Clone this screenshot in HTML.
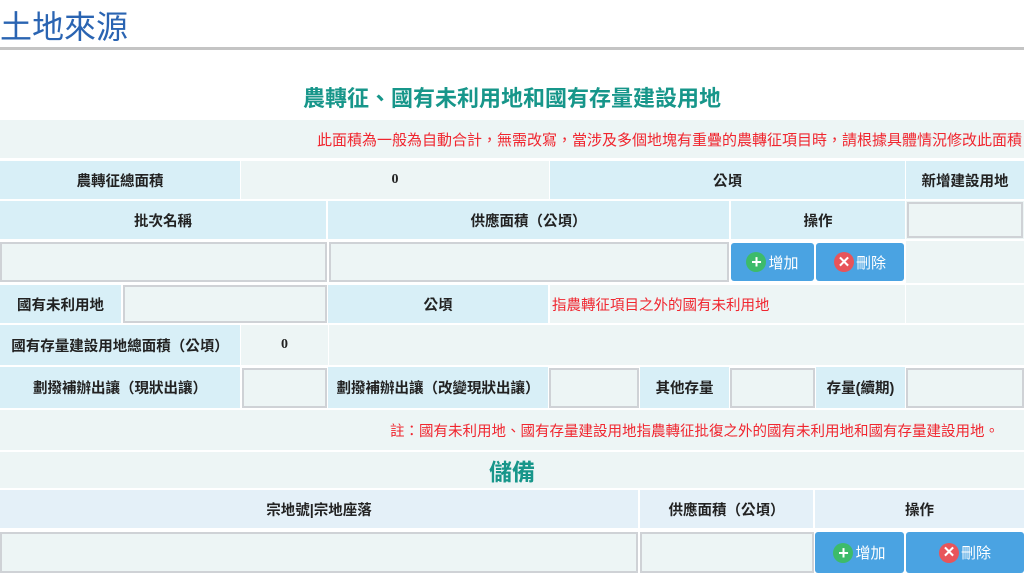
<!DOCTYPE html>
<html><head><meta charset="utf-8"><style>
*{margin:0;padding:0;box-sizing:border-box}
body{width:1024px;height:573px;overflow:hidden;background:#fff;font-family:"Liberation Sans","Noto Sans CJK TC",sans-serif;position:relative}
.a{position:absolute}
.h{position:absolute;background:#d8eff7;font-weight:bold;font-size:14.5px;color:#222;display:flex;align-items:center;justify-content:center;white-space:nowrap}
.d{position:absolute;background:#edf5f5;font-size:14px;color:#222;display:flex;align-items:center;white-space:nowrap;overflow:hidden}
.i{position:absolute;background:#edf5f5;border:2px solid #cfd2d6}
.b{position:absolute;background:#4aa3e2;border-radius:3px;color:#fff;font-size:15px;display:flex;align-items:center;justify-content:center;gap:2px}
.ic{width:20px;height:20px;border-radius:50%;color:#fff;font-weight:bold;display:flex;align-items:center;justify-content:center;font-size:18px;line-height:1}
.red{color:#f0262f}
</style></head><body>
<div class="a" style="left:0;top:2px;font-size:32px;color:#2a64b2;">土地來源</div>
<div class="a" style="left:0;top:47px;width:1024px;height:3px;background:#c4c4c4"></div>
<div class="a" style="left:0;top:81px;width:1024px;text-align:center;font-size:22px;font-weight:bold;color:#17968a">農轉征、國有未利用地和國有存量建設用地</div>

<div class="d red" style="left:0;top:120px;width:1024px;height:38px;padding-left:317px;font-size:15px">此面積為一般為自動合計，無需改寫，當涉及多個地塊有重疊的農轉征項目時，請根據具體情況修改此面積</div>

<div class="h" style="left:0;top:161px;width:240px;height:38px">農轉征總面積</div>
<div class="d" style="left:241px;top:161px;width:308px;height:38px;justify-content:center;font-weight:bold;font-family:'Liberation Serif',serif">0</div>
<div class="h" style="left:550px;top:161px;width:355px;height:38px">公頃</div>
<div class="h" style="left:906px;top:161px;width:118px;height:38px">新增建設用地</div>

<div class="h" style="left:0;top:201px;width:326px;height:38px">批次名稱</div>
<div class="h" style="left:328px;top:201px;width:401px;height:38px">供應面積（公頃）</div>
<div class="h" style="left:731px;top:201px;width:174px;height:38px">操作</div>
<div class="d" style="left:906px;top:201px;width:118px;height:38px"></div>
<div class="i" style="left:907px;top:202px;width:116px;height:36px"></div>

<div class="i" style="left:0;top:242px;width:327px;height:40px"></div>
<div class="i" style="left:329px;top:242px;width:400px;height:40px"></div>
<div class="b" style="left:731px;top:243px;width:83px;height:38px"><span class="ic" style="background:#3dbb6a">+</span>增加</div>
<div class="b" style="left:816px;top:243px;width:88px;height:38px"><span class="ic" style="background:#e8545a;font-size:15px">✕</span>刪除</div>
<div class="d" style="left:906px;top:241px;width:118px;height:42px"></div>

<div class="h" style="left:0;top:285px;width:121px;height:38px">國有未利用地</div>
<div class="i" style="left:123px;top:285px;width:204px;height:38px"></div>
<div class="h" style="left:328px;top:285px;width:220px;height:38px">公頃</div>
<div class="d red" style="left:550px;top:285px;width:355px;height:38px;padding-left:2px;font-size:14.5px">指農轉征項目之外的國有未利用地</div>
<div class="d" style="left:906px;top:285px;width:118px;height:38px"></div>

<div class="h" style="left:0;top:325px;width:240px;height:40px">國有存量建設用地總面積（公頃）</div>
<div class="d" style="left:241px;top:325px;width:87px;height:40px;justify-content:center;font-weight:bold;font-family:'Liberation Serif',serif">0</div>
<div class="d" style="left:329px;top:325px;width:695px;height:40px"></div>

<div class="h" style="left:0;top:367px;width:240px;height:41px">劃撥補辦出讓（現狀出讓）</div>
<div class="i" style="left:242px;top:368px;width:85px;height:40px"></div>
<div class="h" style="left:328px;top:367px;width:220px;height:41px">劃撥補辦出讓（改變現狀出讓）</div>
<div class="i" style="left:549px;top:368px;width:90px;height:40px"></div>
<div class="h" style="left:640px;top:367px;width:89px;height:41px">其他存量</div>
<div class="i" style="left:730px;top:368px;width:85px;height:40px"></div>
<div class="h" style="left:816px;top:367px;width:89px;height:41px">存量(續期)</div>
<div class="i" style="left:906px;top:368px;width:118px;height:40px"></div>

<div class="d red" style="left:0;top:410px;width:1024px;height:40px;padding-left:390px;font-size:14.5px">註：國有未利用地、國有存量建設用地指農轉征批復之外的國有未利用地和國有存量建設用地。</div>

<div class="d" style="left:0;top:452px;width:1024px;height:36px;justify-content:center;font-size:23px;font-weight:bold;color:#17968a">儲備</div>

<div class="h" style="left:0;top:490px;width:638px;height:38px;background:#e4f0f8">宗地號|宗地座落</div>
<div class="h" style="left:640px;top:490px;width:173px;height:38px;background:#e4f0f8">供應面積（公頃）</div>
<div class="h" style="left:815px;top:490px;width:209px;height:38px;background:#e4f0f8">操作</div>

<div class="i" style="left:0;top:532px;width:638px;height:41px"></div>
<div class="i" style="left:640px;top:532px;width:174px;height:41px"></div>
<div class="b" style="left:815px;top:532px;width:89px;height:41px"><span class="ic" style="background:#3dbb6a">+</span>增加</div>
<div class="b" style="left:906px;top:532px;width:118px;height:41px"><span class="ic" style="background:#e8545a;font-size:15px">✕</span>刪除</div>
</body></html>
